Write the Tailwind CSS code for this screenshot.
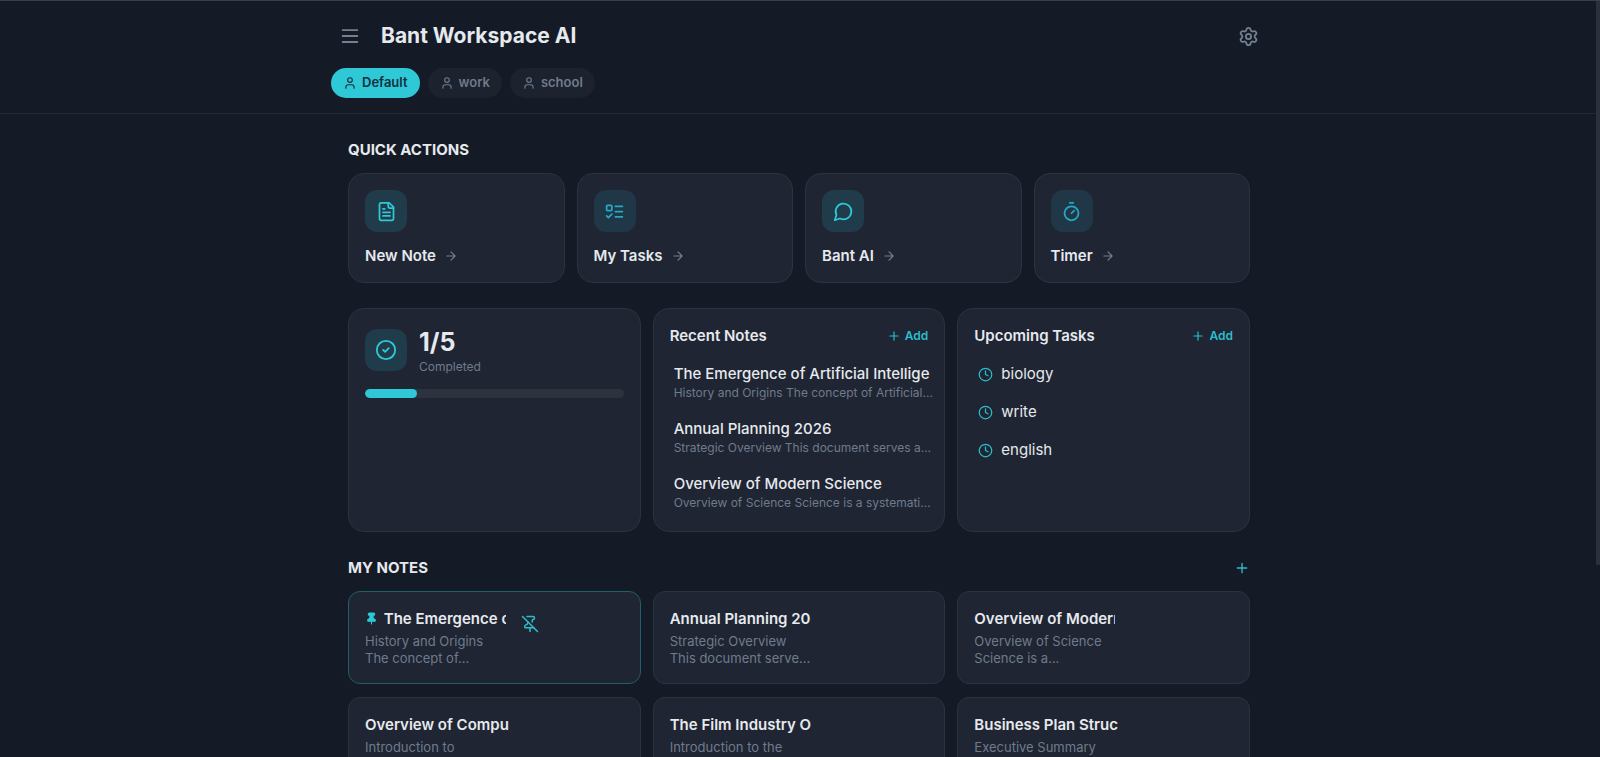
<!DOCTYPE html>
<html lang="en">
<head>
    <meta charset="UTF-8">
    <meta name="viewport" content="width=device-width, initial-scale=1.0">
    <title>Bant Workspace AI</title>
    <script src="https://cdn.jsdelivr.net/npm/@tailwindcss/browser@4"></script>
</head>
<body class="h-screen overflow-hidden border-t border-[#383e4a] bg-[#151b26] pr-0.5 font-['Inter',sans-serif] text-[#e6e9ee]">

<!-- Shared icons -->
<svg class="hidden">
    <symbol id="user" viewBox="0 0 24 24"><circle cx="12" cy="7" r="4"/><path d="M19 21v-2a4 4 0 0 0-4-4H9a4 4 0 0 0-4 4v2"/></symbol>
    <symbol id="arrow" viewBox="0 0 24 24"><path d="M5 12h14M12 5l7 7-7 7"/></symbol>
    <symbol id="plus" viewBox="0 0 24 24"><path d="M5 12h14M12 5v14"/></symbol>
    <symbol id="clock" viewBox="0 0 24 24"><circle cx="12" cy="12" r="10"/><path d="M12 6v6l4 2"/></symbol>
</svg>

<!-- Header -->
<header class="border-b border-[#232936] pt-[17px] pb-[15px]">
    <div class="mx-auto max-w-[936px]">
        <div class="flex h-9 items-center pl-px">
            <button aria-label="Menu" class="flex size-9 items-center justify-center text-[#748091]">
                <svg class="size-[22px]" viewBox="0 0 24 24" fill="none" stroke="currentColor" stroke-width="2" stroke-linecap="round"><path d="M4 5.500h16M4 12h16M4 18.500h16"/></svg>
            </button>
            <h1 class="ml-[13px] text-[21px] font-bold">Bant Workspace AI</h1>
            <button aria-label="Settings" class="mr-px ml-auto flex size-9 items-center justify-center text-[#748091]">
                <svg class="size-[21px]" viewBox="0 0 24 24" fill="none" stroke="currentColor" stroke-width="2" stroke-linecap="round" stroke-linejoin="round"><path d="M9.671 4.136a2.340 2.340 0 0 1 4.659 0 2.340 2.340 0 0 0 3.319 1.915 2.340 2.340 0 0 1 2.330 4.033 2.340 2.340 0 0 0 0 3.831 2.340 2.340 0 0 1-2.330 4.033 2.340 2.340 0 0 0-3.319 1.915 2.340 2.340 0 0 1-4.659 0 2.340 2.340 0 0 0-3.320-1.915 2.340 2.340 0 0 1-2.330-4.033 2.340 2.340 0 0 0 0-3.831A2.340 2.340 0 0 1 6.350 6.051a2.340 2.340 0 0 0 3.319-1.915"/><circle cx="12" cy="12" r="3"/></svg>
            </button>
        </div>
        <nav class="mt-3.5 flex gap-2 text-[13px] font-semibold">
            <button class="flex h-[30px] items-center gap-[5px] rounded-full bg-[#2ec8d6] px-3 text-[#17303f]">
                <svg class="size-3.5" fill="none" stroke="currentColor" stroke-width="2" stroke-linecap="round" stroke-linejoin="round"><use href="#user"/></svg>
                Default
            </button>
            <button class="flex h-[30px] items-center gap-[5px] rounded-full bg-[#1c222e] px-3 text-[#6f7b8d]">
                <svg class="size-3.5" fill="none" stroke="currentColor" stroke-width="2" stroke-linecap="round" stroke-linejoin="round"><use href="#user"/></svg>
                work
            </button>
            <button class="flex h-[30px] items-center gap-[5px] rounded-full bg-[#1c222e] px-3 text-[#6f7b8d]">
                <svg class="size-3.5" fill="none" stroke="currentColor" stroke-width="2" stroke-linecap="round" stroke-linejoin="round"><use href="#user"/></svg>
                school
            </button>
        </nav>
    </div>
</header>

<main class="mx-auto max-w-[902px] pt-[25px]">
    <!-- Quick actions -->
    <h2 class="mb-3 text-[15px] leading-[22px] font-bold">QUICK ACTIONS</h2>
    <div class="grid grid-cols-4 gap-3">
        <button class="rounded-2xl border border-[#2c323e] bg-[#1f2532] p-4 pb-[15px] text-left">
            <span class="flex size-[42px] items-center justify-center rounded-xl bg-[#203b49] text-[#2ec8d6]">
                <svg class="size-[21px]" viewBox="0 0 24 24" fill="none" stroke="currentColor" stroke-width="2" stroke-linecap="round" stroke-linejoin="round"><path d="M15 2H6a2 2 0 0 0-2 2v16a2 2 0 0 0 2 2h12a2 2 0 0 0 2-2V7Z"/><path d="M14 2v4a2 2 0 0 0 2 2h4M10 9H8M16 13H8M16 17H8"/></svg>
            </span>
            <span class="mt-[13px] flex items-center gap-2 text-[15px] leading-[22px] font-semibold">New Note
                <svg class="size-3.5 text-[#748091]" fill="none" stroke="currentColor" stroke-width="2" stroke-linecap="round" stroke-linejoin="round"><use href="#arrow"/></svg>
            </span>
        </button>
        <button class="rounded-2xl border border-[#2c323e] bg-[#1f2532] p-4 pb-[15px] text-left">
            <span class="flex size-[42px] items-center justify-center rounded-xl bg-[#203747] text-[#25a9c4]">
                <svg class="size-[21px]" viewBox="0 0 24 24" fill="none" stroke="currentColor" stroke-width="2" stroke-linecap="round" stroke-linejoin="round"><rect x="3" y="5" width="6" height="6" rx="1"/><path d="m3 17 2 2 4-4M13 6h8M13 12h8M13 18h8"/></svg>
            </span>
            <span class="mt-[13px] flex items-center gap-2 text-[15px] leading-[22px] font-semibold">My Tasks
                <svg class="size-3.5 text-[#748091]" fill="none" stroke="currentColor" stroke-width="2" stroke-linecap="round" stroke-linejoin="round"><use href="#arrow"/></svg>
            </span>
        </button>
        <button class="rounded-2xl border border-[#2c323e] bg-[#1f2532] p-4 pb-[15px] text-left">
            <span class="flex size-[42px] items-center justify-center rounded-xl bg-[#203b49] text-[#2ec8d6]">
                <svg class="size-[21px]" viewBox="0 0 24 24" fill="none" stroke="currentColor" stroke-width="2" stroke-linecap="round" stroke-linejoin="round"><path d="M7.900 20A9 9 0 1 0 4 16.100L2 22Z"/></svg>
            </span>
            <span class="mt-[13px] flex items-center gap-2 text-[15px] leading-[22px] font-semibold">Bant AI
                <svg class="size-3.5 text-[#748091]" fill="none" stroke="currentColor" stroke-width="2" stroke-linecap="round" stroke-linejoin="round"><use href="#arrow"/></svg>
            </span>
        </button>
        <button class="rounded-2xl border border-[#2c323e] bg-[#1f2532] p-4 pb-[15px] text-left">
            <span class="flex size-[42px] items-center justify-center rounded-xl bg-[#203747] text-[#25a9c4]">
                <svg class="size-[21px]" viewBox="0 0 24 24" fill="none" stroke="currentColor" stroke-width="2" stroke-linecap="round" stroke-linejoin="round"><path d="M10 2h4M12 14l3-3"/><circle cx="12" cy="14" r="8"/></svg>
            </span>
            <span class="mt-[13px] flex items-center gap-2 text-[15px] leading-[22px] font-semibold">Timer
                <svg class="size-3.5 text-[#748091]" fill="none" stroke="currentColor" stroke-width="2" stroke-linecap="round" stroke-linejoin="round"><use href="#arrow"/></svg>
            </span>
        </button>
    </div>

    <!-- Overview -->
    <div class="mt-[25px] grid grid-cols-3 gap-3">
        <section class="rounded-2xl border border-[#2c323e] bg-[#1f2532] p-4">
            <div class="flex items-center gap-3">
                <span class="flex size-[42px] items-center justify-center rounded-xl bg-[#203b49] text-[#2ec8d6]">
                    <svg class="size-[22px]" viewBox="0 0 24 24" fill="none" stroke="currentColor" stroke-width="2" stroke-linecap="round" stroke-linejoin="round"><circle cx="12" cy="12" r="10"/><path d="m9 12 2 2 4-4"/></svg>
                </span>
                <div>
                    <p class="text-[25px] leading-[34px] font-bold">1/5</p>
                    <p class="text-xs text-[#6f7b8d]">Completed</p>
                </div>
            </div>
            <div class="mt-3.5 h-[9px] overflow-hidden rounded-full bg-[#2c323e]">
                <div class="h-full rounded-full bg-[#2ec8d6]" style="width: 20%"></div>
            </div>
        </section>

        <section class="rounded-2xl border border-[#2c323e] bg-[#1f2532] p-4 pb-3.5">
            <div class="mb-2.5 flex items-center justify-between">
                <h3 class="text-[15px] leading-[22px] font-semibold">Recent Notes</h3>
                <button class="flex items-center gap-1 text-xs font-semibold text-[#2bbecd]">
                    <svg class="size-3.5" fill="none" stroke="currentColor" stroke-width="2" stroke-linecap="round"><use href="#plus"/></svg>Add
                </button>
            </div>
            <ul class="flex flex-col gap-[5px] whitespace-nowrap">
                <li class="py-1.5 pl-1">
                    <p class="text-[15px] leading-[22px] font-medium">The Emergence of Artificial Intellige</p>
                    <p class="text-xs text-[#6f7b8d]">History and Origins The concept of Artificial...</p>
                </li>
                <li class="py-1.5 pl-1">
                    <p class="text-[15px] leading-[22px] font-medium">Annual Planning 2026</p>
                    <p class="text-xs text-[#6f7b8d]">Strategic Overview This document serves a...</p>
                </li>
                <li class="py-1.5 pl-1">
                    <p class="text-[15px] leading-[22px] font-medium">Overview of Modern Science</p>
                    <p class="text-xs text-[#6f7b8d]">Overview of Science Science is a systemati...</p>
                </li>
            </ul>
        </section>

        <section class="rounded-2xl border border-[#2c323e] bg-[#1f2532] p-4">
            <div class="mb-2.5 flex items-center justify-between">
                <h3 class="text-[15px] leading-[22px] font-semibold">Upcoming Tasks</h3>
                <button class="flex items-center gap-1 text-xs font-semibold text-[#2bbecd]">
                    <svg class="size-3.5" fill="none" stroke="currentColor" stroke-width="2" stroke-linecap="round"><use href="#plus"/></svg>Add
                </button>
            </div>
            <ul class="flex flex-col gap-1 text-[15px] leading-[22px]">
                <li class="flex items-center gap-2 px-1 py-1.5">
                    <svg class="size-[15px] text-[#2bbecd]" fill="none" stroke="currentColor" stroke-width="2" stroke-linecap="round" stroke-linejoin="round"><use href="#clock"/></svg>biology
                </li>
                <li class="flex items-center gap-2 px-1 py-1.5">
                    <svg class="size-[15px] text-[#2bbecd]" fill="none" stroke="currentColor" stroke-width="2" stroke-linecap="round" stroke-linejoin="round"><use href="#clock"/></svg>write
                </li>
                <li class="flex items-center gap-2 px-1 py-1.5">
                    <svg class="size-[15px] text-[#2bbecd]" fill="none" stroke="currentColor" stroke-width="2" stroke-linecap="round" stroke-linejoin="round"><use href="#clock"/></svg>english
                </li>
            </ul>
        </section>
    </div>

    <!-- Notes -->
    <div class="mt-[25px] mb-3 flex items-center justify-between">
        <h2 class="text-[15px] leading-[22px] font-bold">MY NOTES</h2>
        <button aria-label="Add note" class="text-[#2bbecd]">
            <svg class="size-4" fill="none" stroke="currentColor" stroke-width="2" stroke-linecap="round"><use href="#plus"/></svg>
        </button>
    </div>
    <div class="grid grid-cols-3 gap-x-3 gap-y-[13px]">
        <article class="flex items-start gap-2 rounded-xl border border-[#225d68] bg-[#1f2532] p-4">
            <div class="w-[141px]">
                <h3 class="overflow-hidden text-[15px] leading-[22px] font-semibold whitespace-nowrap">
                    <svg class="mr-0.5 inline size-[13px] align-[-1px] text-[#2ec8d6]" viewBox="0 0 24 24" fill="currentColor" stroke="currentColor" stroke-width="2" stroke-linecap="round" stroke-linejoin="round"><path d="M12 17v5"/><path d="M9 10.760a2 2 0 0 1-1.110 1.790l-1.780.9A2 2 0 0 0 5 15.240V16a1 1 0 0 0 1 1h12a1 1 0 0 0 1-1v-.76a2 2 0 0 0-1.110-1.790l-1.780-.9A2 2 0 0 1 15 10.760V7a1 1 0 0 1 1-1 2 2 0 0 0 0-4H8a2 2 0 0 0 0 4 1 1 0 0 1 1 1z"/></svg>
                    The Emergence of Artificial
                </h3>
                <p class="mt-[3px] text-[13px] leading-[17px] text-[#6f7b8d]">History and Origins<br>The concept of...</p>
            </div>
            <button aria-label="Unpin note" class="flex size-8 items-center justify-center text-[#2bbecd]">
                <svg class="size-[18px]" viewBox="0 0 24 24" fill="none" stroke="currentColor" stroke-width="2" stroke-linecap="round" stroke-linejoin="round"><path d="M12 17v5M15 9.340V7a1 1 0 0 1 1-1 2 2 0 0 0 0-4H7.890M2 2l20 20"/><path d="M9 9v1.760a2 2 0 0 1-1.110 1.790l-1.780.9A2 2 0 0 0 5 15.240V16a1 1 0 0 0 1 1h11"/></svg>
            </button>
        </article>
        <article class="rounded-xl border border-[#2c323e] bg-[#1f2532] p-4">
            <div class="w-[141px]">
                <h3 class="overflow-hidden text-[15px] leading-[22px] font-semibold whitespace-nowrap">Annual Planning 2026</h3>
                <p class="mt-[3px] text-[13px] leading-[17px] text-[#6f7b8d]">Strategic Overview<br>This document serve...</p>
            </div>
        </article>
        <article class="rounded-xl border border-[#2c323e] bg-[#1f2532] p-4">
            <div class="w-[141px]">
                <h3 class="overflow-hidden text-[15px] leading-[22px] font-semibold whitespace-nowrap">Overview of Modern Science</h3>
                <p class="mt-[3px] text-[13px] leading-[17px] text-[#6f7b8d]">Overview of Science<br>Science is a...</p>
            </div>
        </article>
        <article class="rounded-xl border border-[#2c323e] bg-[#1f2532] p-4">
            <h3 class="text-[15px] leading-[22px] font-semibold">Overview of Compu</h3>
            <p class="mt-[3px] text-[13px] leading-[17px] text-[#6f7b8d]">Introduction to</p>
        </article>
        <article class="rounded-xl border border-[#2c323e] bg-[#1f2532] p-4">
            <h3 class="text-[15px] leading-[22px] font-semibold">The Film Industry O</h3>
            <p class="mt-[3px] text-[13px] leading-[17px] text-[#6f7b8d]">Introduction to the</p>
        </article>
        <article class="rounded-xl border border-[#2c323e] bg-[#1f2532] p-4">
            <h3 class="text-[15px] leading-[22px] font-semibold">Business Plan Struc</h3>
            <p class="mt-[3px] text-[13px] leading-[17px] text-[#6f7b8d]">Executive Summary</p>
        </article>
    </div>
</main>

<!-- Scroll thumb -->
<div class="fixed top-px right-0 h-[564px] w-1 bg-[#2a303c]"></div>

</body>
</html>
